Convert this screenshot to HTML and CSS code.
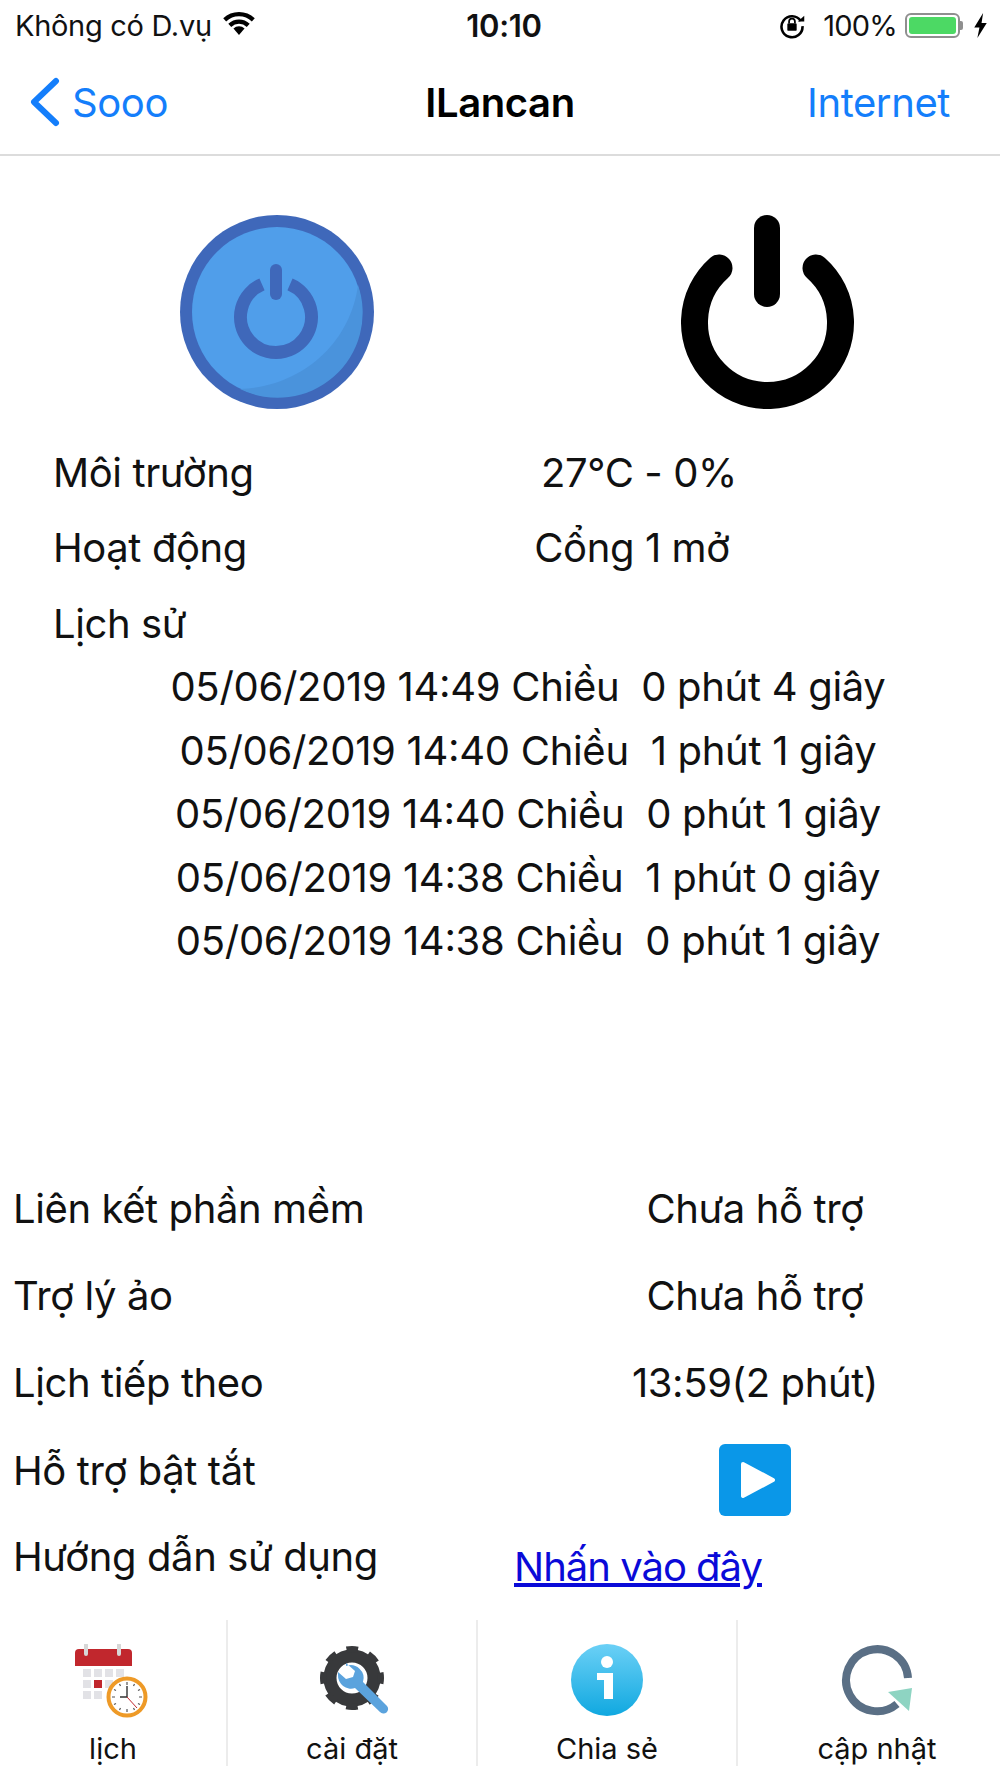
FILE: index.html
```html
<!DOCTYPE html>
<html lang="vi">
<head>
<meta charset="utf-8">
<title>ILancan</title>
<link rel="stylesheet" href="styles.css">
</head>
<body>
<div class="app">
  <div class="status">
    <div class="status-left">
      <span>Không có D.vụ</span>
      <svg class="wifi" viewBox="0 0 36 26"><path d="M18 25l-6-7a8.500 8.500 0 0 1 12 0z" fill="#000"/><path d="M8 14.500a14.500 14.500 0 0 1 20 0" fill="none" stroke="#000" stroke-width="4.600"/><path d="M2.500 8.500a22.500 22.500 0 0 1 31 0" fill="none" stroke="#000" stroke-width="4.600"/></svg>
    </div>
    <div class="status-time">10:10</div>
    <div class="status-right">
      <svg class="lock" viewBox="0 0 24 24"><path d="M19.500 8.500A9 9 0 1 0 21 13" fill="none" stroke="#000" stroke-width="2.200"/><path d="M17 9h5.500V4z" fill="#000"/><rect x="8" y="10.500" width="8" height="6.500" rx="1" fill="#000"/><path d="M9.500 10.500V9a2.500 2.500 0 0 1 5 0v1.500" fill="none" stroke="#000" stroke-width="1.500"/></svg>
      <span>100%</span>
      <span class="battery"><span class="battery-fill"></span></span>
      <span class="battery-cap"></span>
      <svg class="bolt" viewBox="0 0 12 24"><path d="M8.500 0L0 14h5L3 24 12 9.500H7z" fill="#000"/></svg>
    </div>
  </div>
  <nav class="nav">
    <div class="nav-back">
      <svg class="chevron" viewBox="0 0 30 50"><path d="M26 4L4 25l22 21" fill="none" stroke="#147efb" stroke-width="6" stroke-linecap="round" stroke-linejoin="round"/></svg>
      <span>Sooo</span>
    </div>
    <div class="nav-title">ILancan</div>
    <div class="nav-action">Internet</div>
  </nav>
  <main class="main">
    <div class="power">
      <svg class="power-blue" viewBox="0 0 194 194">
        <circle cx="97" cy="97" r="97" fill="#3f68ba"/>
        <circle cx="97" cy="97" r="85" fill="#509eea"/>
        <path d="M178 70A85 85 0 0 1 60 174C120 172 170 130 178 70z" fill="#4a93dc"/>
        <path d="M82 69.400A35.500 35.500 0 1 0 110 69.400" fill="none" stroke="#3f68ba" stroke-width="13"/>
        <path d="M96 55v24" fill="none" stroke="#3f68ba" stroke-width="12" stroke-linecap="round"/>
      </svg>
      <svg class="power-black" viewBox="0 0 174 194">
        <path d="M38 53A73 73 0 1 0 135 53" fill="none" stroke="#000" stroke-width="27" stroke-linecap="round"/>
        <path d="M86 13v66" fill="none" stroke="#000" stroke-width="26" stroke-linecap="round"/>
      </svg>
    </div>
    <section class="env">
      <div class="env-row"><span>Môi trường</span><span class="env-value">27°C - 0%</span></div>
      <div class="env-row"><span>Hoạt động</span><span class="env-value env-shift">Cổng 1 mở</span></div>
      <div class="env-row"><span>Lịch sử</span></div>
    </section>
    <section class="history">
      <div>05/06/2019 14:49 Chiều&nbsp; 0 phút 4 giây</div>
      <div>05/06/2019 14:40 Chiều&nbsp; 1 phút 1 giây</div>
      <div>05/06/2019 14:40 Chiều&nbsp; 0 phút 1 giây</div>
      <div>05/06/2019 14:38 Chiều&nbsp; 1 phút 0 giây</div>
      <div>05/06/2019 14:38 Chiều&nbsp; 0 phút 1 giây</div>
    </section>
    <section class="info">
      <div class="info-row"><span>Liên kết phần mềm</span><span class="info-value">Chưa hỗ trợ</span></div>
      <div class="info-row"><span>Trợ lý ảo</span><span class="info-value">Chưa hỗ trợ</span></div>
      <div class="info-row"><span>Lịch tiếp theo</span><span class="info-value">13:59(2 phút)</span></div>
      <div class="info-row"><span>Hỗ trợ bật tắt</span><span class="info-value">
        <svg class="play" viewBox="0 0 72 72"><rect width="72" height="72" rx="6" fill="#0a97e8"/><path d="M24 20L54 36 24 52z" fill="#fff" stroke="#fff" stroke-width="4" stroke-linejoin="round"/></svg>
      </span></div>
      <div class="info-row"><span>Hướng dẫn sử dụng</span><a class="link" href="#">Nhấn vào đây</a></div>
    </section>
  </main>
  <footer class="tabs">
    <div class="tab tab-1">
      <svg class="tab-icon" viewBox="0 0 76 76">
        <path d="M0 9a4 4 0 0 1 4-4h49a4 4 0 0 1 4 4v13H0z" fill="#c1272d"/>
        <path d="M11 1v9M44 1v9" stroke="#d7d7d7" stroke-width="4" stroke-linecap="round"/>
        <g fill="#e2e2e6"><rect x="8" y="25" width="8" height="8"/><rect x="19" y="25" width="8" height="8"/><rect x="30" y="25" width="8" height="8"/><rect x="41" y="25" width="8" height="8"/><rect x="8" y="36" width="8" height="8"/><rect x="30" y="36" width="8" height="8"/><rect x="8" y="47" width="8" height="8"/><rect x="19" y="47" width="8" height="8"/></g>
        <rect x="19" y="36" width="8" height="8" fill="#c1272d"/>
        <circle cx="52" cy="53" r="18.500" fill="#fff" stroke="#ee9a27" stroke-width="4"/>
        <path d="M52 38v3M52 65v3M37 53h3M64 53h3M44.500 40l1 2M59.500 66l-1-2M39 45.500l2 1M65 60.500l-2-1M59.500 40l-1 2M44.500 66l1-2M39 60.500l2-1M65 45.500l-2 1" stroke="#555" stroke-width="1.200"/>
        <path d="M52 42v11M52 53h-7" fill="none" stroke="#333" stroke-width="1.400"/>
        <path d="M52 53l10 11" fill="none" stroke="#c1272d" stroke-width="1"/>
      </svg>
      <span>lịch</span>
    </div>
    <div class="tab tab-2">
      <svg class="tab-icon" viewBox="0 0 76 76">
        <circle cx="38" cy="34" r="22" fill="none" stroke="#38393b" stroke-width="13"/>
        <circle cx="38" cy="34" r="29" fill="none" stroke="#38393b" stroke-width="6" stroke-dasharray="11.500 11.280" stroke-dashoffset="5.750"/>
        <path d="M32 22a13 13 0 0 1 17 16l24 24a4.500 4.500 0 0 1-7 6L41 44a13 13 0 0 1-17-13l0-3 8 7 7-2 2-6-9-8z" fill="#5ba3dd"/>
      </svg>
      <span>cài đặt</span>
    </div>
    <div class="tab tab-3">
      <svg class="tab-icon" viewBox="0 0 76 76">
        <defs><linearGradient id="info-grad" x1="0" y1="0" x2="0" y2="1"><stop offset="0" stop-color="#6bd0f6"/><stop offset="1" stop-color="#10a8e0"/></linearGradient></defs>
        <circle cx="38" cy="36" r="36" fill="url(#info-grad)"/>
        <circle cx="38" cy="18" r="6" fill="#fff"/>
        <path d="M28 29h16v26h-9V36h-7z" fill="#fff"/>
      </svg>
      <span>Chia sẻ</span>
    </div>
    <div class="tab tab-4">
      <svg class="tab-icon" viewBox="0 0 76 76">
        <path d="M69 34A31 31 0 1 0 58 60" fill="none" stroke="#5a6f85" stroke-width="8"/>
        <path d="M49 48L73 44 70 67z" fill="#8ed4c2"/>
      </svg>
      <span>cập nhật</span>
    </div>
  </footer>
</div>
</body>
</html>
```

FILE: styles.css
```css
* { box-sizing: border-box; }
html, body { margin: 0; padding: 0; background: #fff; }
body { font-family: Inter, "Noto Sans", "Liberation Sans", sans-serif; color: #111; }
.app { width: 1000px; height: 1778px; display: flex; flex-direction: column; overflow: hidden; }

.status { height: 50px; display: grid; grid-template-columns: 1fr auto 1fr; align-items: center; padding: 0 13px 0 15px; font-size: 29px; letter-spacing: -0.3px; color: #111; }
.status-left { display: flex; align-items: center; gap: 9px; }
.wifi { width: 36px; height: 24px; margin-bottom: 2px; }
.status-time { font-weight: 600; font-size: 31px; margin-left: 6px; }
.status-right { display: flex; align-items: center; justify-content: flex-end; gap: 10px; letter-spacing: -0.8px; }
.lock { width: 28px; height: 28px; margin-right: 7px; }
.battery { width: 55px; height: 25px; border: 2px solid #8f8f8f; border-radius: 6px; padding: 2px; display: block; margin-left: -2px; }
.battery-fill { display: block; height: 100%; background: #4cd964; border-radius: 3px; }
.battery-cap { width: 3px; height: 9px; background: #8f8f8f; border-radius: 0 2px 2px 0; margin-left: -10px; }
.bolt { width: 13px; height: 25px; margin-left: 1px; }

.nav { height: 106px; border-bottom: 2px solid #dcdcdc; display: grid; grid-template-columns: 1fr auto 1fr; align-items: center; padding: 0 50px 0 30px; font-size: 40px; letter-spacing: -0.4px; }
.nav-back { display: flex; align-items: center; gap: 12px; color: #147efb; }
.chevron { width: 30px; height: 50px; }
.nav-title { font-weight: 600; color: #000; margin-left: 20px; }
.nav-action { text-align: right; color: #147efb; }

.main { flex: 1; display: flex; flex-direction: column; font-size: 40px; letter-spacing: -0.4px; }
.power { height: 284px; padding-top: 59px; display: flex; align-items: flex-start; flex: none; }
.power-blue { width: 194px; height: 194px; margin-left: 180px; }
.power-black { width: 174px; height: 194px; margin-left: 307px; }

.env { padding-left: 53px; display: flex; flex-direction: column; gap: 11.500px; }
.env-row { height: 64px; display: grid; grid-template-columns: 441px 290px; align-items: center; }
.env-value { text-align: center; }
.env-shift { padding-right: 14px; }

.history { width: 1056px; text-align: center; display: flex; flex-direction: column; font-feature-settings: "case"; letter-spacing: -0.3px; }
.history div { height: 63.500px; line-height: 63.500px; }

.info { margin-top: 192px; padding-left: 13px; display: flex; flex-direction: column; }
.info-row { height: 87px; display: grid; grid-template-columns: 466px 552px; align-items: center; }
.info-value { display: flex; justify-content: center; align-items: center; }
.play { width: 72px; height: 72px; display: block; margin-top: 18px; }
.link { color: #0a0ad8; justify-self: start; margin: 20px 0 0 35px; letter-spacing: -1px; }

.tabs { height: 158px; padding: 0 0 12px; display: grid; grid-template-columns: 228px 250px 260px 262px; font-size: 29px; letter-spacing: 0; flex: none; }
.tab { display: flex; flex-direction: column; align-items: center; justify-content: flex-start; padding-top: 24px; gap: 11px; border-right: 2px solid #ececec; }
.tab-4 { border-right: 0; padding-left: 16px; }
.tab-icon { width: 76px; height: 76px; display: block; flex: none; }
```
